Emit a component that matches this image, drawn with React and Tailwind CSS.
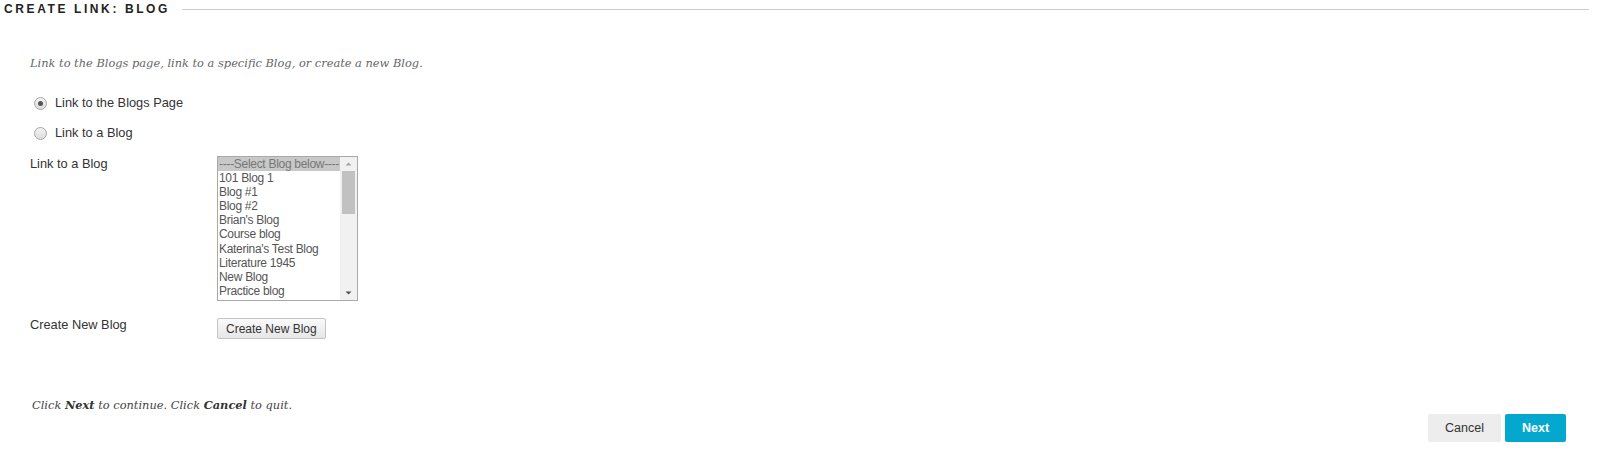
import React from "react";

const items = [
  "101 Blog 1",
  "Blog #1",
  "Blog #2",
  "Brian's Blog",
  "Course blog",
  "Katerina's Test Blog",
  "Literature 1945",
  "New Blog",
  "Practice blog",
];

function Radio({ checked }) {
  return (
    <span className="w-[13px] h-[13px] rounded-full border border-[#a6a6a6] bg-gradient-to-b from-[#f4f4f4] to-[#dcdcdc] flex items-center justify-center shrink-0">
      {checked && <span className="w-[5px] h-[5px] rounded-full bg-[#555]" />}
    </span>
  );
}

export default function App() {
  const sans = { fontFamily: '"Liberation Sans", Arial, sans-serif' };
  return (
    <div className="w-[1600px] h-[458px] bg-white text-[#333] flex flex-col" style={sans}>
      <div className="flex items-center h-[18px] pl-1 pr-[11px]">
        <span className="text-[12px] font-bold tracking-[2.6px] text-[#222] leading-none">CREATE LINK: BLOG</span>
        <div className="flex-1 h-px bg-[#cccccc] ml-[12px]" />
      </div>

      <p
        className="italic text-[#666] ml-[30px] mt-[37px] leading-[16px]"
        style={{ fontFamily: '"DejaVu Serif", Georgia, serif', fontSize: "11.4px" }}
      >
        Link to the Blogs page, link to a specific Blog, or create a new Blog.
      </p>

      <div className="flex items-center ml-[34px] mt-[24px] gap-[8px] h-[16px]">
        <Radio checked />
        <span className="text-[12.8px]">Link to the Blogs Page</span>
      </div>
      <div className="flex items-center ml-[34px] mt-[14px] gap-[8px] h-[16px]">
        <Radio />
        <span className="text-[12.8px]">Link to a Blog</span>
      </div>

      <div className="flex ml-[30px] mt-[15px]">
        <div className="w-[187px] text-[12.8px] leading-[14px] pt-[1px]">Link to a Blog</div>
        <div className="w-[141px] h-[145px] border border-[#a9a9a9] flex bg-white">
          <div className="flex-1 flex flex-col text-[12px] leading-[14.1px] text-[#555] tracking-[-0.3px]">
            <div className="bg-[#c8c8c8] text-center text-[#777]">----Select Blog below----</div>
            {items.map((t) => (
              <div key={t} className="pl-[1px] whitespace-nowrap">{t}</div>
            ))}
          </div>
          <div className="w-[17px] bg-[#f1f1f1] flex flex-col items-center">
            <svg width="17" height="14" viewBox="0 0 17 14" className="shrink-0">
              <path d="M5.5 8.5 L8.5 5.5 L11.5 8.5 Z" fill="#a3a3a3" />
            </svg>
            <div className="w-[13px] h-[43px] bg-[#c1c1c1]" />
            <div className="flex-1" />
            <svg width="17" height="14" viewBox="0 0 17 14" className="shrink-0">
              <path d="M5.5 5.5 L8.5 8.5 L11.5 5.5 Z" fill="#505050" />
            </svg>
          </div>
        </div>
      </div>

      <div className="flex ml-[30px] mt-[17px] items-start">
        <div className="w-[187px] text-[12.8px] pt-[0px] leading-[14px]">Create New Blog</div>
        <button className="h-[21px] px-[8px] text-[12px] text-[#333] border border-[#c4c4c4] rounded-[2px] bg-gradient-to-b from-[#fafafa] to-[#e6e6e6]">
          Create New Blog
        </button>
      </div>

      <div className="flex items-start mt-[58px] pr-[34px]">
        <p
          className="italic text-[#444] ml-[32px] leading-[16px]"
          style={{ fontFamily: '"DejaVu Serif", Georgia, serif', fontSize: "11.4px" }}
        >
          Click <b className="font-bold text-[#333]">Next</b> to continue. Click <b className="font-bold text-[#333]">Cancel</b> to quit.
        </p>
        <div className="flex-1" />
        <div className="flex gap-[4px] mt-[17px]">
          <button className="w-[73px] h-[28px] rounded-[2px] bg-[#ededed] text-[12.5px] text-[#333]">Cancel</button>
          <button className="w-[61px] h-[28px] rounded-[2px] bg-[#04a8cf] text-[12.5px] font-bold text-white">Next</button>
        </div>
      </div>
    </div>
  );
}
